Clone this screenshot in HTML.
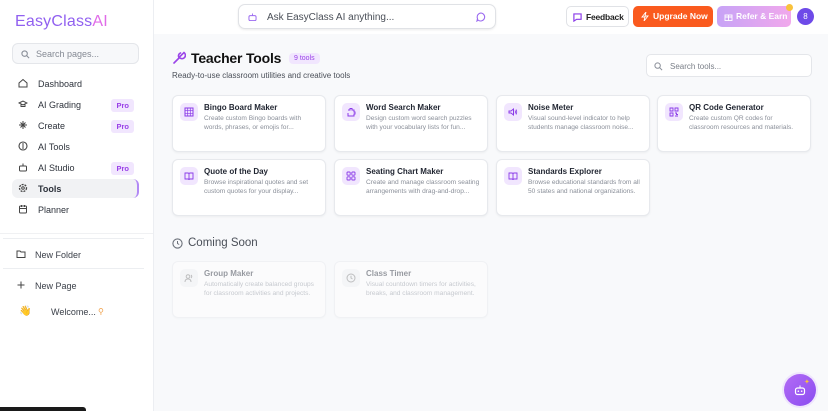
<!DOCTYPE html>
<html><head><meta charset="utf-8"><style>
*{box-sizing:border-box;margin:0;padding:0}
body{width:828px;height:411px;overflow:hidden;font-family:"Liberation Sans",sans-serif;background:#f8f9fb;position:relative;color:#1f2430}
.sb{position:absolute;left:0;top:0;width:154px;height:411px;background:#fff;border-right:1px solid #eceef2}
.logo{position:absolute;left:15px;top:13px;font-size:16px;color:#9160f0;letter-spacing:.2px}
.logo b{font-weight:normal;color:#e06ce8}
.ss{position:absolute;left:12px;top:43px;width:127px;height:21px;border:1px solid #e4e6ea;border-radius:6px;background:#f7f8fa;font-size:9px;color:#858a94;padding:5px 0 0 23px}
.nav{position:absolute;left:12px;width:127px;height:19px;font-size:9px;color:#2d323b;padding:5px 0 0 26px}
.nav svg{position:absolute;left:6px;top:4px}
.pro{position:absolute;right:5px;top:4px;background:#f1e6fe;color:#9a40e8;font-size:7.5px;font-weight:bold;padding:2px 5px;border-radius:3px}
.act{background:#f1f2f4;border-right:2px solid #b28af5;border-radius:6px;font-weight:bold}
.hdr{position:absolute;left:154px;top:0;right:0;height:34px;background:#fff}
.ask{position:absolute;left:238px;top:4px;width:258px;height:25px;border:1px solid #e0e2e6;border-radius:7px;box-shadow:0 1px 2px rgba(0,0,0,.08);font-size:10px;color:#4a4f58;padding:7px 0 0 28px;background:#fff}
.btn{position:absolute;top:6px;height:21px;border-radius:5px;font-size:8.5px;padding:5px 0 0 0;text-align:center;font-weight:bold;white-space:nowrap}
.card{position:absolute;width:154px;height:57px;background:#fff;border:1px solid #e7e9ed;border-radius:6px;box-shadow:0 1px 2px rgba(0,0,0,.05)}
.ic{position:absolute;left:7px;top:7px;width:18px;height:18px;border-radius:5px;background:#f1e6fe}
.ic svg{position:absolute;left:4px;top:4px}
.ct{position:absolute;left:31px;top:7px;font-size:8px;font-weight:bold;color:#1f2430}
.cd{position:absolute;left:31px;top:18px;width:119px;font-size:6.6px;line-height:9px;color:#8a8f99}
.dis{opacity:.45}
.dis .ic{background:#f1f2f4}
</style></head><body>
<div class="sb">
<div class="logo">EasyClass<b>AI</b></div>
<div class="ss"><svg style="position:absolute;left:8px;top:6px" width="9" height="9" viewBox="0 0 10 10"><circle cx="4" cy="4" r="3" fill="none" stroke="#8a8f99" stroke-width="1.2"/><path d="M6.3 6.3L9 9" stroke="#8a8f99" stroke-width="1.2"/></svg>Search pages...</div>
<div class="nav" style="top:74px"><svg width="10" height="10" viewBox="0 0 10 10"><path d="M1 5L5 1.5 9 5V9H1Z" fill="none" stroke="#444" stroke-width="1"/></svg>Dashboard</div>
<div class="nav" style="top:95px"><svg width="10" height="10" viewBox="0 0 10 10"><path d="M1 4L5 2 9 4 5 6Z M3 5V7.5H7V5" fill="none" stroke="#444" stroke-width="1"/></svg>AI Grading<span class="pro">Pro</span></div>
<div class="nav" style="top:116px"><svg width="10" height="10" viewBox="0 0 10 10"><path d="M5 1V9M1 5H9M2.5 2.5L7.5 7.5M7.5 2.5L2.5 7.5" stroke="#444" stroke-width="1"/></svg>Create<span class="pro">Pro</span></div>
<div class="nav" style="top:137px"><svg width="10" height="10" viewBox="0 0 10 10"><circle cx="5" cy="5" r="4" fill="none" stroke="#444" stroke-width="1.1"/><path d="M5 2V8" stroke="#444"/></svg>AI Tools</div>
<div class="nav" style="top:158px"><svg width="10" height="10" viewBox="0 0 10 10"><rect x="1.5" y="4" width="7" height="5" rx="1" fill="none" stroke="#444"/><path d="M5 1.5V4" stroke="#444"/></svg>AI Studio<span class="pro">Pro</span></div>
<div class="nav act" style="top:179px"><svg width="10" height="10" viewBox="0 0 10 10"><circle cx="5" cy="5" r="3.5" fill="none" stroke="#444" stroke-width="1.3" stroke-dasharray="2 1"/><circle cx="5" cy="5" r="1.3" fill="none" stroke="#444"/></svg>Tools</div>
<div class="nav" style="top:200px"><svg width="10" height="10" viewBox="0 0 10 10"><rect x="1.5" y="2" width="7" height="7" rx="1" fill="none" stroke="#444"/><path d="M1.5 4.5H8.5M3.5 1V3M6.5 1V3" stroke="#444"/></svg>Planner</div>
<div style="position:absolute;left:0;top:233px;width:153px;height:1px;background:#f0f1f3"></div>
<div style="position:absolute;left:3px;top:238px;width:141px;height:1px;background:#eceef1"></div>
<div class="nav" style="top:245px;left:10px;padding-left:25px;color:#3a3f48"><svg width="10" height="10" viewBox="0 0 10 10"><path d="M1 2H4L5 3H9V8.5H1Z" fill="none" stroke="#444"/></svg>New Folder</div>
<div style="position:absolute;left:3px;top:268px;width:141px;height:1px;background:#eceef1"></div>
<div class="nav" style="top:276px;left:10px;padding-left:25px;color:#3a3f48"><svg width="10" height="10" viewBox="0 0 10 10"><path d="M5 1.5V8.5M1.5 5H8.5" stroke="#444"/></svg>New Page</div>
<div style="position:absolute;left:19px;top:306px;font-size:10px">👋</div>
<div style="position:absolute;left:51px;top:307px;font-size:9px;color:#3a3f48">Welcome...</div>
<div style="position:absolute;left:98px;top:307px;font-size:8px;color:#f0a04a">⚲</div>
<div style="position:absolute;left:0;top:407px;width:86px;height:4px;background:#1a1a1a;border-radius:0 3px 0 0"></div>
</div>
<div class="hdr"></div>
<div class="ask"><svg style="position:absolute;left:9px;top:8px" width="9" height="8" viewBox="0 0 10 9"><rect x="1" y="3" width="8" height="5.5" rx="1.5" fill="none" stroke="#9b6af0" stroke-width="1.1"/><path d="M5 .5V3" stroke="#9b6af0"/></svg>Ask EasyClass AI anything...<svg style="position:absolute;right:9px;top:7px" width="10" height="10" viewBox="0 0 10 10"><path d="M5 1A4 4 0 1 1 2 8L1 9 1.5 6.5A4 4 0 0 1 5 1Z" fill="none" stroke="#9b6af0" stroke-width="1.1"/></svg></div>
<div class="btn" style="left:566px;width:63px;border:1px solid #e0e2e6;background:#fff;color:#222;text-align:left;padding-left:19px;letter-spacing:-.2px"><svg style="position:absolute;left:6px;top:6px" width="9" height="9" viewBox="0 0 10 10"><path d="M1 1H9V7H4L1 9Z" fill="none" stroke="#8a3ae8" stroke-width="1.3"/></svg>Feedback</div>
<div class="btn" style="left:633px;width:80px;background:#fa5a1e;color:#fff;text-align:left;padding-left:20px"><svg style="position:absolute;left:8px;top:6px" width="8" height="9" viewBox="0 0 8 9"><path d="M5 0L1 5H4L3 9 7 4H4Z" fill="none" stroke="#fff" stroke-width=".9"/></svg>Upgrade Now</div>
<div class="btn" style="left:717px;width:74px;background:linear-gradient(90deg,#c7a3f6,#f1a8ec);color:#fff;text-align:left;padding-left:19px"><svg style="position:absolute;left:7px;top:6px" width="9" height="9" viewBox="0 0 9 9"><rect x="1" y="3" width="7" height="5.5" fill="none" stroke="#fff" stroke-width=".9"/><path d="M4.5 3V8.5M1 5H8" stroke="#fff" stroke-width=".9"/></svg>Refer &amp; Earn</div>
<div style="position:absolute;left:786px;top:4px;width:7px;height:7px;border-radius:50%;background:#f9c23c"></div>
<div style="position:absolute;left:797px;top:8px;width:17px;height:17px;border-radius:50%;background:#6e4ae8;color:#fff;font-size:8px;text-align:center;line-height:17px">8</div>
<svg style="position:absolute;left:172px;top:51px" width="14" height="14" viewBox="0 0 14 14"><path d="M2 12L7 7M8.5 2A3 3 0 0 0 7 6.5L12 1.5A3 3 0 0 1 8 7" fill="none" stroke="#9b45e8" stroke-width="1.6" stroke-linecap="round"/></svg>
<div style="position:absolute;left:191px;top:50px;font-size:14px;font-weight:bold;color:#111;letter-spacing:-.2px">Teacher Tools</div>
<div style="position:absolute;left:289px;top:53px;background:#f1e6fe;color:#9a40e8;font-size:7px;padding:2px 5px;border-radius:4px">9 tools</div>
<div style="position:absolute;left:172px;top:71px;font-size:8px;color:#4a4f58">Ready-to-use classroom utilities and creative tools</div>
<div style="position:absolute;left:646px;top:54px;width:166px;height:23px;background:#fff;border:1px solid #e4e6ea;border-radius:5px;font-size:8px;color:#7a7f88;padding:7px 0 0 23px"><svg style="position:absolute;left:7px;top:7px" width="9" height="9" viewBox="0 0 10 10"><circle cx="4" cy="4" r="3" fill="none" stroke="#8a8f99" stroke-width="1.1"/><path d="M6.3 6.3L9 9" stroke="#8a8f99" stroke-width="1.1"/></svg>Search tools...</div>

<div class="card" style="left:172px;top:95px"><div class="ic"><svg width="10" height="10" viewBox="0 0 10 10"><rect x="1" y="1" width="8" height="8" fill="none" stroke="#8a3ae8"/><path d="M1 3.7H9M1 6.3H9M3.7 1V9M6.3 1V9" stroke="#8a3ae8" stroke-width=".7"/></svg></div><div class="ct">Bingo Board Maker</div><div class="cd">Create custom Bingo boards with<br>words, phrases, or emojis for...</div></div>
<div class="card" style="left:334px;top:95px"><div class="ic"><svg width="10" height="10" viewBox="0 0 10 10"><path d="M2 3H4V1.5H6V3H8V5H9V7H8V9H2V6" fill="none" stroke="#8a3ae8"/></svg></div><div class="ct">Word Search Maker</div><div class="cd">Design custom word search puzzles<br>with your vocabulary lists for fun...</div></div>
<div class="card" style="left:496px;top:95px"><div class="ic"><svg width="10" height="10" viewBox="0 0 10 10"><path d="M1 4H3L5.5 2V8L3 6H1Z" fill="none" stroke="#8a3ae8"/><path d="M7 3.5Q8 5 7 6.5M8 2.5Q9.5 5 8 7.5" fill="none" stroke="#8a3ae8" stroke-width=".8"/></svg></div><div class="ct">Noise Meter</div><div class="cd">Visual sound-level indicator to help<br>students manage classroom noise...</div></div>
<div class="card" style="left:657px;top:95px"><div class="ic"><svg width="10" height="10" viewBox="0 0 10 10"><path d="M1 1H4V4H1ZM6 1H9V4H6ZM1 6H4V9H1Z" fill="none" stroke="#8a3ae8" stroke-width=".9"/><path d="M6 6H7.5V7.5H9M6 9H9" stroke="#8a3ae8" stroke-width=".9"/></svg></div><div class="ct">QR Code Generator</div><div class="cd">Create custom QR codes for<br>classroom resources and materials.</div></div>
<div class="card" style="left:172px;top:159px"><div class="ic"><svg width="10" height="10" viewBox="0 0 10 10"><path d="M1 2H4Q5 2 5 3V9Q5 8 4 8H1ZM9 2H6Q5 2 5 3V9Q5 8 6 8H9Z" fill="none" stroke="#8a3ae8" stroke-width=".9"/></svg></div><div class="ct">Quote of the Day</div><div class="cd">Browse inspirational quotes and set<br>custom quotes for your display...</div></div>
<div class="card" style="left:334px;top:159px"><div class="ic"><svg width="10" height="10" viewBox="0 0 10 10"><rect x="1" y="1" width="3.2" height="3.2" rx=".8" fill="none" stroke="#8a3ae8" stroke-width=".9"/><rect x="5.8" y="1" width="3.2" height="3.2" rx=".8" fill="none" stroke="#8a3ae8" stroke-width=".9"/><rect x="1" y="5.8" width="3.2" height="3.2" rx=".8" fill="none" stroke="#8a3ae8" stroke-width=".9"/><rect x="5.8" y="5.8" width="3.2" height="3.2" rx=".8" fill="none" stroke="#8a3ae8" stroke-width=".9"/></svg></div><div class="ct">Seating Chart Maker</div><div class="cd" style="white-space:nowrap">Create and manage classroom seating<br>arrangements with drag-and-drop...</div></div>
<div class="card" style="left:496px;top:159px"><div class="ic"><svg width="10" height="10" viewBox="0 0 10 10"><path d="M1 2H4Q5 2 5 3V9Q5 8 4 8H1ZM9 2H6Q5 2 5 3V9Q5 8 6 8H9Z" fill="none" stroke="#8a3ae8" stroke-width=".9"/></svg></div><div class="ct">Standards Explorer</div><div class="cd">Browse educational standards from all<br>50 states and national organizations.</div></div>

<svg style="position:absolute;left:172px;top:238px" width="11" height="11" viewBox="0 0 11 11"><circle cx="5.5" cy="5.5" r="4.6" fill="none" stroke="#6b7079" stroke-width="1.1"/><path d="M5.5 3V5.5L7.2 6.5" fill="none" stroke="#6b7079"/></svg>
<div style="position:absolute;left:188px;top:237px;font-size:11.5px;color:#4a4f58">Coming Soon</div>
<div class="card dis" style="left:172px;top:261px"><div class="ic"><svg width="10" height="10" viewBox="0 0 10 10"><circle cx="4" cy="3.5" r="1.8" fill="none" stroke="#777"/><path d="M1 9Q1 6 4 6Q7 6 7 9M7 2Q8.5 3.5 7 5" fill="none" stroke="#777"/></svg></div><div class="ct">Group Maker</div><div class="cd">Automatically create balanced groups<br>for classroom activities and projects.</div></div>
<div class="card dis" style="left:334px;top:261px"><div class="ic"><svg width="10" height="10" viewBox="0 0 10 10"><circle cx="5" cy="5" r="4" fill="none" stroke="#777"/><path d="M5 2.8V5L6.5 6" fill="none" stroke="#777"/></svg></div><div class="ct">Class Timer</div><div class="cd">Visual countdown timers for activities,<br>breaks, and classroom management.</div></div>

<div style="position:absolute;left:784px;top:374px;width:32px;height:32px;border-radius:50%;background:linear-gradient(135deg,#b36cf5,#8a4cf0);box-shadow:0 0 0 2px #efe6fd"><svg style="position:absolute;left:10px;top:10px" width="12" height="12" viewBox="0 0 12 12"><rect x="1.5" y="4" width="9" height="6.5" rx="2" fill="none" stroke="#fff" stroke-width="1.2"/><path d="M6 1.5V4" stroke="#fff"/><circle cx="4.3" cy="7.2" r=".8" fill="#fff"/><circle cx="7.7" cy="7.2" r=".8" fill="#fff"/></svg><span style="position:absolute;left:20px;top:4px;font-size:7px;color:#f9c23c">✦</span></div>
</body></html>
